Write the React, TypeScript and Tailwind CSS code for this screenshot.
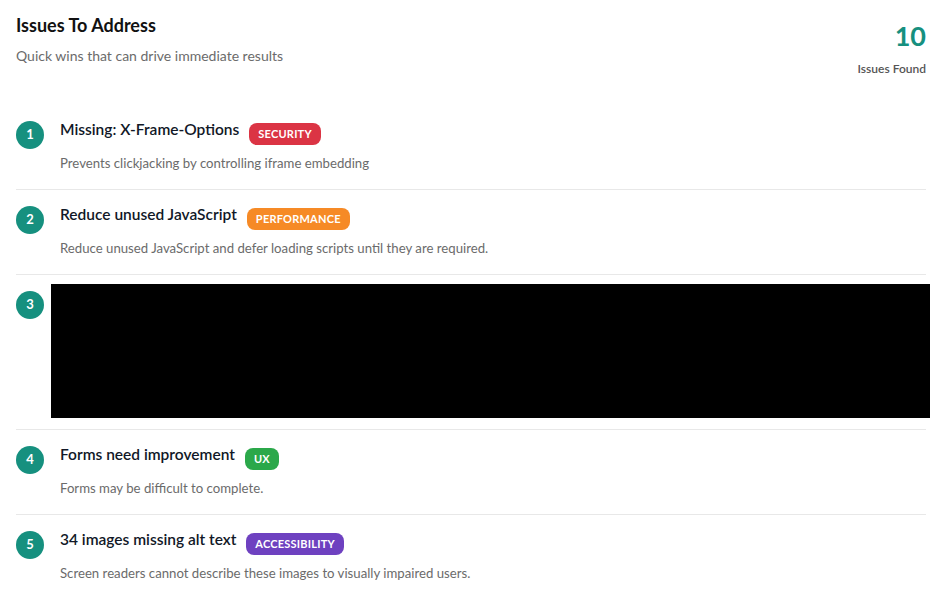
import React, { FC } from "react";

type Issue = {
    no: number;
    title?: string;
    tag?: string;
    tagClass?: string;
    text?: string;
    redacted?: boolean;
};

const issues: Issue[] = [
    {
        no: 1,
        title: 'Missing: X-Frame-Options',
        tag: 'SECURITY',
        tagClass: 'bg-[#db3444]',
        text: 'Prevents clickjacking by controlling iframe embedding',
    },
    {
        no: 2,
        title: 'Reduce unused JavaScript',
        tag: 'PERFORMANCE',
        tagClass: 'bg-[#f68a26]',
        text: 'Reduce unused JavaScript and defer loading scripts until they are required.',
    },
    { no: 3, redacted: true },
    {
        no: 4,
        title: 'Forms need improvement',
        tag: 'UX',
        tagClass: 'bg-[#2ba84a]',
        text: 'Forms may be difficult to complete.',
    },
    {
        no: 5,
        title: '34 images missing alt text',
        tag: 'ACCESSIBILITY',
        tagClass: 'bg-[#6e41c0]',
        text: 'Screen readers cannot describe these images to visually impaired users.',
    },
];

const IssueRow: FC<{ issue: Issue; last: boolean }> = ({ issue, last }) => {
    return (
        <div className={`relative flex items-start gap-4 py-4 ${last ? '' : 'border-b border-[#e8e8e8]'}`}>
            <div className="flex h-7 w-7 shrink-0 items-center justify-center rounded-full bg-[#16907f] text-[13px] font-bold text-white">
                {issue.no}
            </div>

            {issue.redacted ? (
                <>
                    <div className="h-[122px] flex-1" />
                    {/* blacked-out row in the screenshot */}
                    <div className="absolute left-[35px] top-[9px] h-[134px] w-[879px] bg-black" />
                </>
            ) : (
                <div className="flex flex-1 flex-col">
                    <div className="flex items-start gap-[10px]">
                        <span className="text-[15.5px] font-semibold leading-[16px] text-[#111827]">
                            {issue.title}
                        </span>
                        <span
                            className={`mt-[2px] rounded-lg px-[9px] py-[4px] text-[11px] font-bold leading-[14px] tracking-[0.02em] text-white ${issue.tagClass}`}
                        >
                            {issue.tag}
                        </span>
                    </div>
                    <p className="mt-[8px] text-[13.2px] leading-[20px] text-[#6b6b6b]">{issue.text}</p>
                </div>
            )}
        </div>
    );
};

const App: FC = () => {
    return (
        <div
            className="min-h-screen w-[940px] bg-white pl-4 pr-[14px] pt-3"
            style={{ fontFamily: 'Lato, "Noto Sans", sans-serif' }}
        >
            <div className="flex items-start justify-between pb-[29px]">
                <div className="flex flex-col">
                    <h2 className="text-[18px] font-bold leading-[26px] text-[#111]">Issues To Address</h2>
                    <p className="mt-[8px] text-[14px] leading-[20px] text-[#6b6b6b]">
                        Quick wins that can drive immediate results
                    </p>
                </div>
                <div className="flex flex-col items-end pt-[8px]">
                    <span className="text-[27px] font-bold leading-[32px] text-[#16907f]">10</span>
                    <span className="mt-[10px] text-[12px] font-semibold leading-[14px] text-[#555]">
                        Issues Found
                    </span>
                </div>
            </div>

            <div className="flex flex-col">
                {issues.map((issue, i) => (
                    <IssueRow key={issue.no} issue={issue} last={i === issues.length - 1} />
                ))}
            </div>
        </div>
    );
};

export default App;
